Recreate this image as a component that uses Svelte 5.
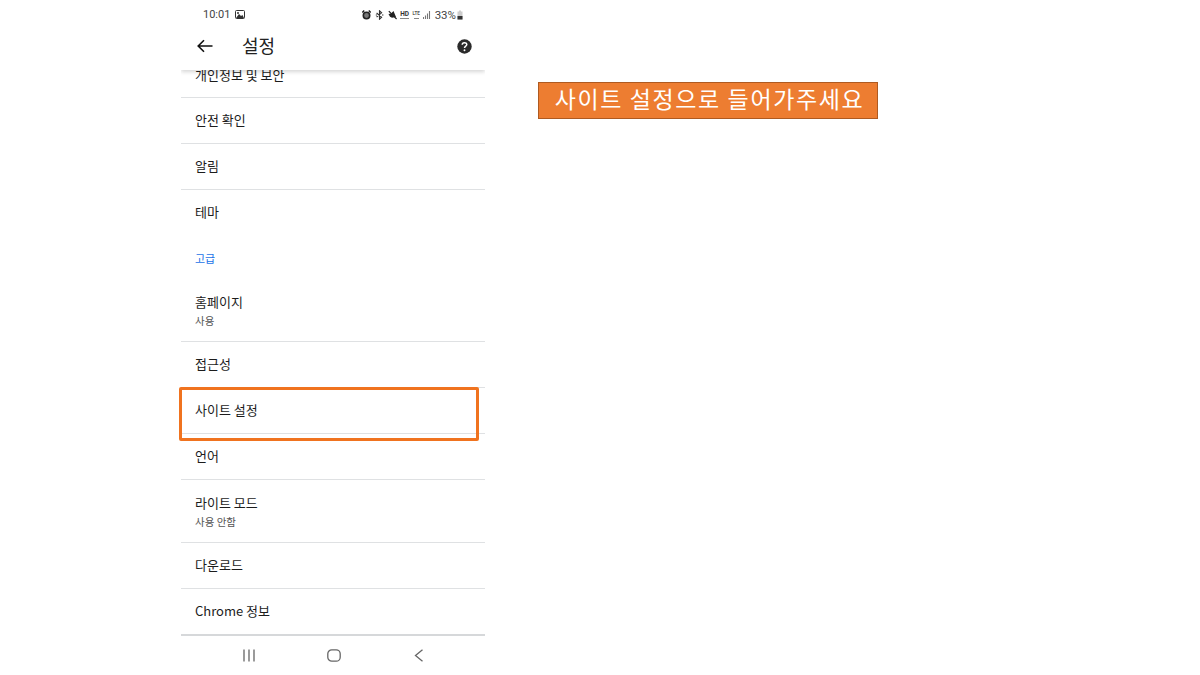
<script>
  const rows = [
    { label: '개인정보 및 보안', cut: true },
    { label: '안전 확인' },
    { label: '알림' },
    { label: '테마', plain: true },
    { label: '고급', section: true },
    { label: '홈페이지', sub: '사용' },
    { label: '접근성' },
    { label: '사이트 설정', marked: true },
    { label: '언어' },
    { label: '라이트 모드', sub: '사용 안함' },
    { label: '다운로드' },
    { label: 'Chrome 정보', last: true }
  ];
</script>

<div class="page">
  <div class="phone">
    <div class="status">
      <div class="status-left">
        <span>10:01</span>
        <svg width="10" height="9" viewBox="0 0 10 9">
          <rect x="0.5" y="0.5" width="9" height="8" rx="1" fill="#fff" stroke="#333" />
          <path d="M1 8 L4 4 L6 6 L7.5 5 L9 8 Z" fill="#333" />
          <circle cx="3" cy="3" r="1" fill="#333" />
        </svg>
      </div>
      <div class="status-right">
        <svg class="i-alarm" width="9" height="10" viewBox="0 0 9 10">
          <circle cx="4.5" cy="5.5" r="3.2" fill="#777" stroke="#222" stroke-width="1.6" />
          <path d="M0.3 2.6 L2.2 0.6 M8.7 2.6 L6.8 0.6" stroke="#222" stroke-width="1.5" />
        </svg>
        <svg class="i-bt" width="9" height="10" viewBox="0 0 9 10">
          <path d="M1.6 3 L6.6 7.2 L4.5 9.2 V0.8 L6.6 2.8 L1.6 7" fill="none" stroke="#333" stroke-width="1.1" />
          <path d="M0.8 5 H2 M7 5 H8.4" stroke="#333" stroke-width="1.2" />
        </svg>
        <svg class="i-mute" width="9" height="10" viewBox="0 0 9 10">
          <path d="M0.5 4 L3 3.5 L5.5 1 L8 7 L4 7.8 L2 6.8 Z" fill="#222" />
          <path d="M0.8 1.2 L8.6 9" stroke="#222" stroke-width="1.2" />
        </svg>
        <div class="net"><b>HD</b><i></i></div>
        <div class="net lte"><b>LTE</b><i></i></div>
        <svg class="i-signal" width="8" height="9" viewBox="0 0 8 9">
          <path d="M0.5 9 V7 M2.5 9 V5.5 M4.5 9 V3.5 M6.5 9 V1" stroke="#777" stroke-width="1.1" />
        </svg>
        <span class="pct">33%</span>
        <svg width="6" height="10" viewBox="0 0 6 10">
          <path d="M2 0.5 H4 V1.5 H5.5 V9.5 H0.5 V1.5 H2 Z" fill="#ccc" />
          <rect x="0.5" y="6" width="5" height="3.5" fill="#333" />
        </svg>
      </div>
    </div>

    <header class="bar">
      <svg class="back" width="16" height="14" viewBox="0 0 16 14">
        <path d="M15.5 7 H1.5 M7 1.2 L1.2 7 L7 12.8" fill="none" stroke="#111" stroke-width="1.6" />
      </svg>
      <h1>설정</h1>
      <svg class="help" width="15" height="15" viewBox="0 0 15 15">
        <circle cx="7.5" cy="7.5" r="7.2" fill="#2b2b2b" />
        <path d="M5.2 5.8 C5.2 3 9.8 3 9.8 5.6 C9.8 7.2 7.5 7 7.5 9" fill="none" stroke="#fff" stroke-width="1.5" />
        <circle cx="7.5" cy="11.2" r="0.95" fill="#fff" />
      </svg>
    </header>

    <div class="list">
      {#each rows as row}
        {#if row.section}
          <div class="section">{row.label}</div>
        {:else}
          <div class="row" class:cut={row.cut} class:plain={row.plain} class:two={row.sub} class:marked={row.marked} class:last={row.last}>
            <div class="label">{row.label}</div>
            {#if row.sub}<div class="sub">{row.sub}</div>{/if}
          </div>
        {/if}
      {/each}
    </div>

    <nav class="nav">
      <svg width="14" height="13" viewBox="0 0 14 13">
        <path d="M2 0.5 V12.5 M7 0.5 V12.5 M12 0.5 V12.5" stroke="#666" stroke-width="1.3" />
      </svg>
      <svg width="14" height="13" viewBox="0 0 14 13">
        <rect x="0.8" y="0.8" width="12.4" height="11.4" rx="4" fill="none" stroke="#666" stroke-width="1.3" />
      </svg>
      <svg width="14" height="13" viewBox="0 0 14 13">
        <path d="M10.5 0.8 L3.5 6.5 L10.5 12.2" fill="none" stroke="#666" stroke-width="1.3" />
      </svg>
    </nav>
  </div>

  <div class="callout">사이트 설정으로 들어가주세요</div>
</div>

<style>
  :global(body) {
    margin: 0;
    background: #fff;
  }

  .page {
    width: 1200px;
    height: 675px;
    overflow: hidden;
    display: flex;
    align-items: flex-start;
    padding-left: 181px;
    box-sizing: border-box;
    font-family: "Noto Sans CJK KR", Roboto, sans-serif;
    color: #1f1f1f;
  }

  .phone {
    width: 304px;
    height: 675px;
    flex: none;
    display: flex;
    flex-direction: column;
  }

  .status {
    height: 28px;
    flex: none;
    display: flex;
    justify-content: space-between;
    align-items: center;
    padding: 1px 22px 0 22px;
    box-sizing: border-box;
    font-family: Roboto, sans-serif;
    font-size: 11px;
    color: #444;
  }

  .status-left {
    display: flex;
    align-items: center;
    gap: 5px;
  }

  .status-right {
    display: flex;
    align-items: center;
    gap: 3px;
  }

  .i-bt {
    margin: 0 1px;
  }

  .net {
    display: flex;
    flex-direction: column;
    align-items: center;
    width: 10px;
    line-height: 6px;
  }

  .net b {
    font-size: 6.5px;
    font-weight: 700;
    color: #333;
  }

  .net i {
    width: 9px;
    height: 1px;
    margin-top: 1px;
    background: #888;
  }

  .lte {
    width: 7px;
  }

  .lte b {
    font-size: 4.5px;
    color: #555;
  }

  .lte i {
    width: 5px;
  }

  .i-signal {
    margin-right: 1px;
  }

  .pct {
    font-size: 11.5px;
    color: #444;
    margin-right: -2px;
  }

  .bar {
    height: 42px;
    flex: none;
    display: flex;
    align-items: center;
    padding: 0 13px 6px 16px;
    box-sizing: border-box;
    background: #fff;
    position: relative;
    z-index: 2;
    box-shadow: 0 2px 4px rgba(0, 0, 0, 0.16);
    clip-path: inset(0 0 -8px 0);
  }

  .bar h1 {
    margin: 0 0 2px 29px;
    font-size: 18px;
    font-weight: 400;
    color: #222;
    flex: 1;
  }

  .list {
    height: 565px;
    flex: none;
    display: flex;
    flex-direction: column;
  }

  .row {
    height: 46px;
    flex: none;
    position: relative;
    display: flex;
    flex-direction: column;
    justify-content: center;
    padding: 0 0 2px 14px;
    box-sizing: border-box;
    border-bottom: 1px solid #dfe1e3;
  }

  .cut {
    height: 28px;
    justify-content: flex-start;
  }

  .cut .label {
    margin-top: -4px;
  }

  .plain {
    border-bottom: none;
  }

  .two {
    height: 63px;
    padding-bottom: 0;
  }

  .last {
    border-bottom: 2px solid #d6d8da;
    height: 47px;
    padding-bottom: 1px;
  }

  .label {
    font-size: 13px;
    line-height: 18px;
    color: #1c1c1c;
  }

  .sub {
    font-size: 10.5px;
    line-height: 15px;
    margin-top: 2px;
    color: #555;
  }

  .section {
    height: 43px;
    flex: none;
    display: flex;
    align-items: center;
    padding-left: 14px;
    font-size: 11px;
    color: #1a73e8;
  }

  .marked::after {
    content: "";
    position: absolute;
    left: -2px;
    right: 6px;
    top: -1px;
    bottom: -8px;
    border: 3px solid #f0731f;
    border-radius: 2px;
    box-sizing: border-box;
    pointer-events: none;
  }

  .nav {
    flex: 1;
    display: flex;
    justify-content: center;
    align-items: flex-start;
    gap: 71px;
    padding-top: 14px;
    padding-left: 2px;
  }

  .callout {
    margin: 82px 0 0 53px;
    width: 340px;
    height: 37px;
    box-sizing: border-box;
    padding-left: 3px;
    background: #ed7d31;
    border: 1px solid #ae5a21;
    color: #fff;
    font-size: 23px;
    letter-spacing: 1.6px;
    line-height: 31px;
    text-align: center;
    white-space: nowrap;
    font-family: "Noto Sans CJK KR", sans-serif;
  }
</style>
